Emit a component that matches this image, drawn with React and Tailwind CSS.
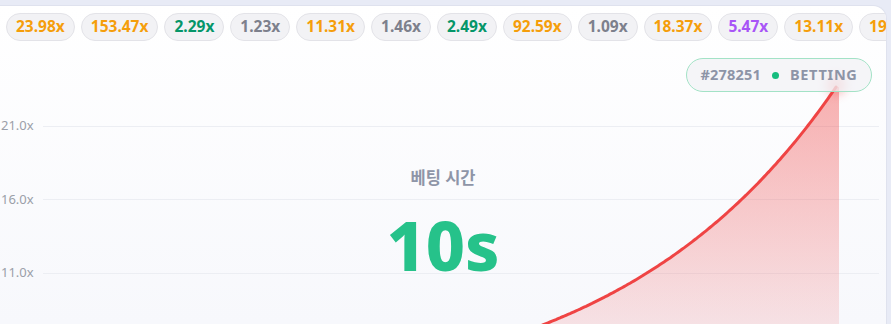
import React from "react";

const history = [
  { v: "23.98x", c: "text-[#f59e0b]" },
  { v: "153.47x", c: "text-[#f59e0b]" },
  { v: "2.29x", c: "text-[#059669]" },
  { v: "1.23x", c: "text-[#7d808c]" },
  { v: "11.31x", c: "text-[#f59e0b]" },
  { v: "1.46x", c: "text-[#7d808c]" },
  { v: "2.49x", c: "text-[#059669]" },
  { v: "92.59x", c: "text-[#f59e0b]" },
  { v: "1.09x", c: "text-[#7d808c]" },
  { v: "18.37x", c: "text-[#f59e0b]" },
  { v: "5.47x", c: "text-[#a855f7]" },
  { v: "13.11x", c: "text-[#f59e0b]" },
  { v: "19.74x", c: "text-[#f59e0b]" },
];

const axis = ["21.0x", "16.0x", "11.0x"];

// exponential crash curve, page coordinates
function curvePoints() {
  const pts = [];
  for (let x = 538; x <= 837; x += 2) {
    const y = 324 - 87.6 * (Math.exp(0.0045 * (x - 545)) - 1);
    pts.push([x, y]);
  }
  return pts;
}

function CrashChart() {
  const pts = curvePoints();
  const line = pts.map((p, i) => `${i ? "L" : "M"}${p[0]} ${p[1].toFixed(1)}`).join(" ");
  const tip = pts[pts.length - 1];
  const area = `${line} L839 ${tip[1].toFixed(1)} L839 330 L538 330 Z`;

  return (
    <svg
      className="absolute left-0 top-0 pointer-events-none"
      width="887"
      height="318"
      viewBox="0 6 887 318"
    >
      <defs>
        <linearGradient id="fill" x1="0" y1="88" x2="0" y2="324" gradientUnits="userSpaceOnUse">
          <stop offset="0" stopColor="#ef4444" stopOpacity="0.42" />
          <stop offset="1" stopColor="#ef4444" stopOpacity="0.13" />
        </linearGradient>
        <filter id="glow" x="-100%" y="-100%" width="300%" height="300%">
          <feGaussianBlur stdDeviation="5" />
        </filter>
      </defs>
      <path d={area} fill="url(#fill)" />
      <path d={line} fill="none" stroke="#ef4444" strokeWidth="3" strokeLinecap="round" />
      <circle cx={tip[0]} cy={tip[1] - 2} r="10" fill="#ef4444" opacity="0.35" filter="url(#glow)" />
    </svg>
  );
}

export default function App() {
  return (
    <div className="relative w-[891px] h-[324px] overflow-hidden bg-[#e8ebf6] pt-[5px] pr-[4px]" style={{ fontFamily: '"Noto Sans", "Noto Sans CJK KR", sans-serif' }}>
      <div className="relative h-full rounded-tr-[14px] border-t border-r border-[#dfe2ee] bg-gradient-to-b from-white to-[#f7f8fc] overflow-hidden">
        {/* recent multipliers */}
        <div className="flex gap-1.5 pt-[7px] pl-[6px] whitespace-nowrap">
          {history.map((h, i) => (
            <span
              key={i}
              className={`shrink-0 h-7 flex items-center px-[9px] rounded-full bg-[#f2f2f5] border border-[#e3e3e8] text-[15.5px] font-bold ${h.c}`}
            >
              {h.v}
            </span>
          ))}
        </div>

        {/* y axis grid */}
        <div className="mt-[75px] flex flex-col gap-[53.5px] pr-[7px]">
          {axis.map((a) => (
            <div key={a} className="h-5 flex items-center">
              <span className="w-[43px] pl-[1px] text-[13px] text-[#9b9fa9]">{a}</span>
              <div className="flex-1 h-px bg-[#eceef3]" />
            </div>
          ))}
        </div>

        <CrashChart />

        {/* countdown */}
        <div className="absolute left-0 right-0 top-[161px] flex flex-col items-center">
          <span className="text-[16.5px] leading-[22px] font-bold text-[#8e95a7]">베팅 시간</span>
          <span className="mt-[21.6px] text-[68px] leading-none font-extrabold text-[#26c28a]">10s</span>
        </div>

        {/* round badge */}
        <div className="absolute left-[686px] top-[52px] w-[186px] h-[34px] flex items-center justify-center gap-[11px] rounded-full border border-[#a3e2c6] bg-[#f1f2f5]/75 text-[14.5px] font-bold text-[#8d94a7]">
          <span className="tracking-[0.2px]">#278251</span>
          <span className="w-[7px] h-[7px] rounded-full bg-[#16bd7f]" />
          <span className="tracking-[0.7px]">BETTING</span>
        </div>
      </div>
    </div>
  );
}
